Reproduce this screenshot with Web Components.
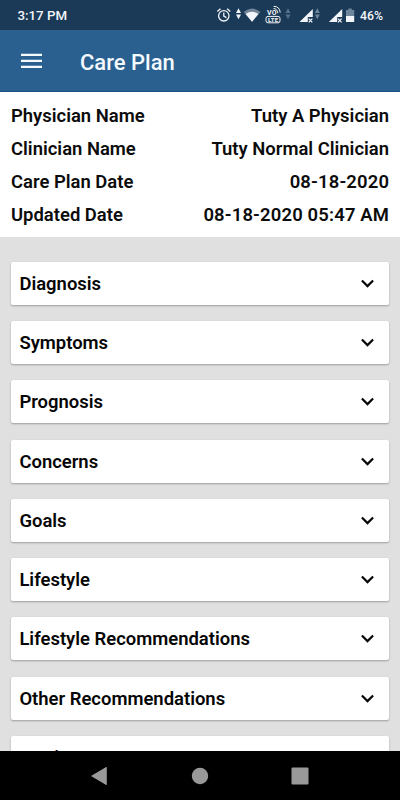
<!DOCTYPE html>
<html lang="en">
<head>
<meta charset="utf-8">
<meta name="viewport" content="width=device-width, initial-scale=1">
<title>Care Plan</title>
<style>
    html, body {
        margin: 0;
        height: 100%;
        overflow: hidden;
    }
    body {
        font-family: Roboto, "Liberation Sans", sans-serif;
        --color-status: #1b3a57;
        --color-primary: #2a6090;
        --color-background: #e0e0e0;
        --color-surface: #fff;
        --color-text: #0c0c0c;
    }
</style>
</head>
<body>
<care-plan-screen></care-plan-screen>

<script>
class StatusBar extends HTMLElement {
    constructor() {
        super();
        this.attachShadow({ mode: 'open' });
        this.shadowRoot.innerHTML = `
            <style>
                :host {
                    display: flex;
                    align-items: center;
                    justify-content: space-between;
                    height: 30px;
                    flex: none;
                    box-sizing: border-box;
                    padding: 1px 18px 0 17.5px;
                    background: var(--color-status);
                    color: #f2f6fa;
                    font-size: 13.3px;
                    font-weight: 500;
                    line-height: 30px;
                }
                .right {
                    display: flex;
                    align-items: center;
                }
                svg {
                    display: block;
                    width: 142px;
                    height: 30px;
                    margin-top: -1px;
                }
                .vo {
                    font-size: 7px;
                    font-weight: 700;
                }
                .lte {
                    font-size: 6px;
                    font-weight: 700;
                }
                .percent {
                    width: 22px;
                    font-size: 12.3px;
                    margin-left: 3px;
                }
            </style>
            <span class="time">${this.getAttribute('time')}</span>
            <span class="right">
                <svg viewBox="215 0 142 30" fill="#f2f6fa">
                    <!-- alarm -->
                    <g fill="none" stroke="#f2f6fa" stroke-width="1.3">
                        <circle cx="223.8" cy="15.8" r="5.2" />
                        <path d="M217.3 11.6l3.2-2.8M230.3 11.6l-3.2-2.8M223.8 12.6v3.5l2.6 1.5" />
                    </g>
                    <!-- data arrows -->
                    <path d="M236 13l2.5-4.7 2.5 4.7zM236 14.6l2.5 4.7 2.5-4.7z" />
                    <!-- wifi -->
                    <path d="M243.6 12Q252 5 260.4 12L252 21.8z" fill-opacity=".4" />
                    <path d="M245.6 14Q252 9.6 258.4 14L252 21.8z" />
                    <!-- VoLTE -->
                    <text class="vo" x="267" y="15.4" textLength="9.5">VO</text>
                    <rect x="266" y="16.4" width="14" height="6.4" rx="2" fill="none" stroke="#f2f6fa" />
                    <text class="lte" x="268" y="21.8" textLength="10">LTE</text>
                    <path d="M273.5 8.6Q277.3 8.6 277.8 13.2M273.6 6.3Q279.6 6.3 280.2 12.6" fill="none" stroke="#f2f6fa" />
                    <path d="M285.5 13l2.5-4.7 2.5 4.7zM285.5 14.6l2.5 4.7 2.5-4.7z" fill="#54708a" />
                    <!-- signal 1 -->
                    <path d="M299.5 22L312.8 9v8h-5v5z" />
                    <path d="M308.7 18.7l3.6 3.6M312.3 18.7l-3.6 3.6" stroke="#f2f6fa" stroke-width="1.2" />
                    <path d="M314.8 13l2.5-4.7 2.5 4.7zM314.8 14.6l2.5 4.7 2.5-4.7z" fill="#6f879c" />
                    <!-- signal 2 -->
                    <path d="M328.9 22L342.2 9v8h-5v5z" />
                    <path d="M338 18.7l3.6 3.6M341.6 18.7l-3.6 3.6" stroke="#f2f6fa" stroke-width="1.2" />
                    <!-- battery -->
                    <path d="M346 16V10h2.4V8.4h3.4V10h2.4v6z" fill="#6f879c" />
                    <path d="M346 16h8.2v6H346z" />
                </svg>
                <span class="percent">${this.getAttribute('battery')}</span>
            </span>
        `;
    }
}

class AppBar extends HTMLElement {
    constructor() {
        super();
        this.attachShadow({ mode: 'open' });
        this.shadowRoot.innerHTML = `
            <style>
                :host {
                    display: flex;
                    align-items: center;
                    flex: none;
                    height: 62px;
                    box-sizing: border-box;
                    padding: 1px 21px 0;
                    gap: 38px;
                    background: var(--color-primary);
                    border-bottom: 1px solid #1c5283;
                    color: #f4f9fd;
                    font-size: 22px;
                    font-weight: 500;
                }
                svg {
                    display: block;
                    width: 21px;
                    height: 16px;
                }
                .title {
                    margin-top: 3px;
                }
            </style>
            <svg viewBox="0 0 21 16" fill="#f4f9fd">
                <path d="M0 .7h21V3H0zM0 6.7h21V9H0zM0 12.7h21V15H0z" />
            </svg>
            <span class="title"><slot></slot></span>
        `;
    }
}

class InfoRow extends HTMLElement {
    constructor() {
        super();
        this.attachShadow({ mode: 'open' });
        this.shadowRoot.innerHTML = `
            <style>
                :host {
                    display: flex;
                    justify-content: space-between;
                    height: 33px;
                    line-height: 33px;
                    font-size: 18.45px;
                    font-weight: 600;
                    color: var(--color-text);
                }
                /* dates are set a little wider than names */
                :host([date]) .value {
                    letter-spacing: 0.17px;
                    margin-right: -0.17px;
                }
            </style>
            <span>${this.getAttribute('label')}</span>
            <span class="value"><slot></slot></span>
        `;
    }
}

class PlanSection extends HTMLElement {
    constructor() {
        super();
        this.attachShadow({ mode: 'open' });
        this.shadowRoot.innerHTML = `
            <style>
                :host {
                    display: flex;
                    align-items: center;
                    justify-content: space-between;
                    flex: none;
                    height: 43px;
                    box-sizing: border-box;
                    padding: 0 15px 0 8.4px;
                    background: var(--color-surface);
                    border-radius: 2px;
                    box-shadow: 0 1px 2px rgba(0, 0, 0, 0.3);
                    color: #060606;
                    font-size: 18.45px;
                    font-weight: 600;
                    line-height: 22px;
                }
                svg {
                    display: block;
                    width: 13px;
                    height: 9px;
                }
                .name {
                    padding-top: 1px;
                }
            </style>
            <span class="name"><slot></slot></span>
            <svg viewBox="0 0 13 9" fill="none" stroke="#060606" stroke-width="2.2">
                <path d="M.9 1.5l5.6 5.6 5.6-5.6" />
            </svg>
        `;
    }
}

class NavBar extends HTMLElement {
    constructor() {
        super();
        this.attachShadow({ mode: 'open' });
        this.shadowRoot.innerHTML = `
            <style>
                :host {
                    display: flex;
                    align-items: center;
                    justify-content: center;
                    gap: 82px;
                    flex: none;
                    height: 49px;
                    background: #000;
                }
                svg {
                    display: block;
                    width: 18px;
                    height: 18px;
                }
            </style>
            <svg viewBox="0 0 18 18" fill="#999"><path d="M0 9L15.2.1q.6-.2.6.5v16.8q0 .7-.6.5z" /></svg>
            <svg viewBox="0 0 18 18" fill="#999"><circle cx="9" cy="9" r="8.2" /></svg>
            <svg viewBox="0 0 18 18" fill="#999"><rect x=".5" y=".5" width="17" height="17" rx="1" /></svg>
        `;
    }
}

class CarePlanScreen extends HTMLElement {
    constructor() {
        super();
        this.attachShadow({ mode: 'open' });
        this._sections = [
            'Diagnosis',
            'Symptoms',
            'Prognosis',
            'Concerns',
            'Goals',
            'Lifestyle',
            'Lifestyle Recommendations',
            'Other Recommendations',
            'Barriers'
        ];
        this.render();
    }

    render() {
        this.shadowRoot.innerHTML = `
            <style>
                :host {
                    display: flex;
                    flex-direction: column;
                    height: 100vh;
                    background: var(--color-background);
                }
                .info {
                    flex: none;
                    height: 145.4px;
                    box-sizing: border-box;
                    padding: 8px 11px 0;
                    background: var(--color-surface);
                }
                .sections {
                    display: flex;
                    flex-direction: column;
                    flex: 1;
                    min-height: 0;
                    gap: 16.22px;
                    padding: 24.6px 11px 0;
                    overflow: hidden;
                }
            </style>
            <status-bar time="3:17 PM" battery="46%"></status-bar>
            <app-bar>Care Plan</app-bar>
            <div class="info">
                <info-row label="Physician Name">Tuty A Physician</info-row>
                <info-row label="Clinician Name">Tuty Normal Clinician</info-row>
                <info-row label="Care Plan Date" date>08-18-2020</info-row>
                <info-row label="Updated Date" date>08-18-2020 05:47 AM</info-row>
            </div>
            <div class="sections">
                ${this._sections.map(name => `<plan-section>${name}</plan-section>`).join('')}
            </div>
            <nav-bar></nav-bar>
        `;
    }
}

customElements.define('status-bar', StatusBar);
customElements.define('app-bar', AppBar);
customElements.define('info-row', InfoRow);
customElements.define('plan-section', PlanSection);
customElements.define('nav-bar', NavBar);
customElements.define('care-plan-screen', CarePlanScreen);
</script>
</body>
</html>
